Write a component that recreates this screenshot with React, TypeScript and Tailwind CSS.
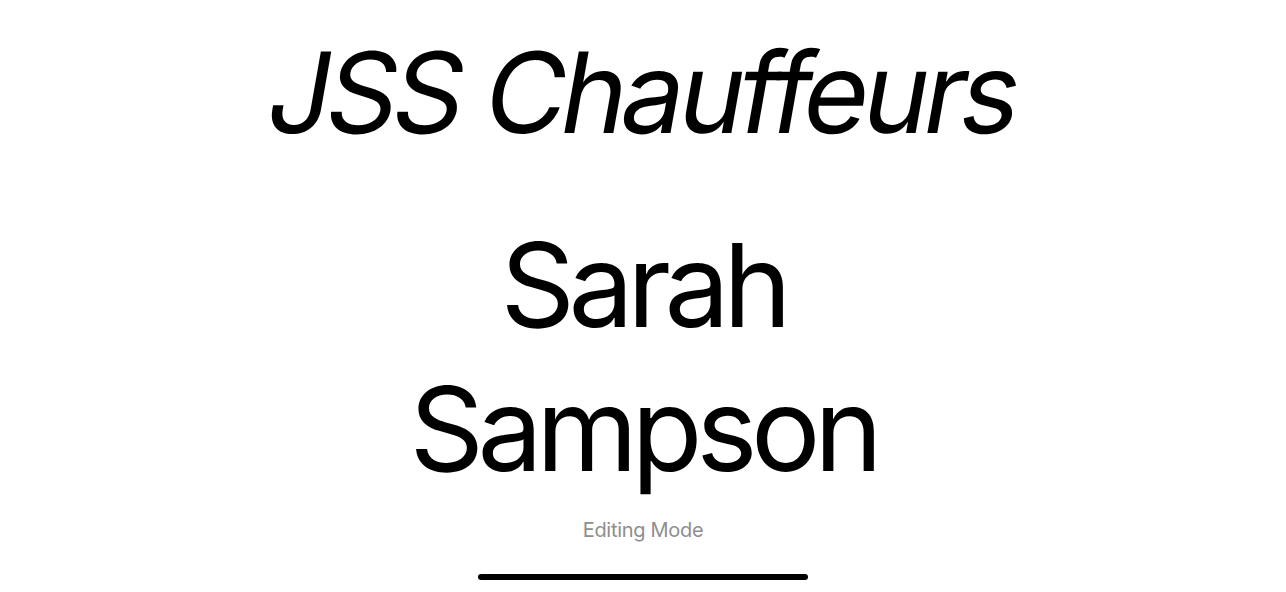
export default function App() {
    return (
        <div className="flex h-[592px] w-full flex-col items-center bg-white font-['Inter',sans-serif] text-black">
            {/* Company name (slanted upright face, keeps the straight f) */}
            <h1 className="mt-[36px] inline-block -skew-x-[10deg] text-[112px] leading-none tracking-[-0.05em]">
                JSS Chauffeurs
            </h1>

            {/* Driver name */}
            <h2 className="mt-[65px] text-center text-[116px] leading-[144px] tracking-[-0.055em]">
                Sarah
                <br />
                Sampson
            </h2>

            <p className="mt-[15px] text-[20px] leading-[28px] tracking-[-0.015em] text-[#8e8e8e]">Editing Mode</p>

            {/* Home indicator */}
            <div className="mt-[30px] h-[6px] w-[330px] rounded-full bg-black" />
        </div>
    );
}
